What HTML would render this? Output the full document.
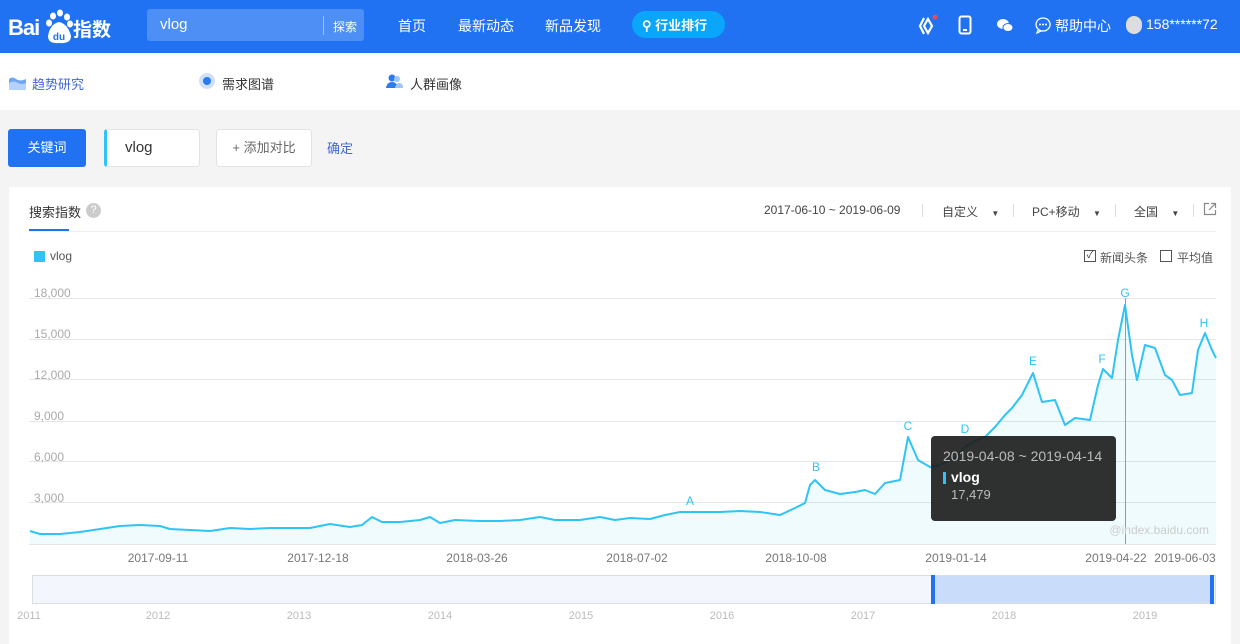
<!DOCTYPE html>
<html><head><meta charset="utf-8"><style>
*{margin:0;padding:0;box-sizing:border-box}
body{width:1240px;height:644px;overflow:hidden;background:#f4f4f4;font-family:"Liberation Sans","Noto Sans CJK SC",sans-serif;position:relative}
.a{position:absolute;white-space:nowrap}
.hd{position:absolute;left:0;top:0;width:1240px;height:53px;background:#2172f2}
.w{color:#fff;font-size:14px}
.nav2{position:absolute;left:0;top:53px;width:1240px;height:57px;background:#fff}
.card{position:absolute;left:9px;top:187px;width:1222px;height:457px;background:#fff}
.g{color:#999;font-size:12px}
</style></head><body>
<div class="hd"></div>
<div class="a" style="left:8px;top:15px;color:#fff;font-size:22px;font-weight:bold;letter-spacing:-1px">Bai</div>
<svg class="a" style="left:44px;top:8px" width="30" height="38" viewBox="0 0 30 38"><g fill="#fff"><ellipse cx="9" cy="8" rx="3" ry="3.5"/><ellipse cx="16" cy="5" rx="3" ry="3.5"/><ellipse cx="23" cy="9" rx="3" ry="3.5"/><ellipse cx="5" cy="15" rx="3" ry="3.5"/><ellipse cx="26" cy="16" rx="3" ry="3.5"/><path d="M4 28 Q6 16 15 14 Q24 16 27 28 Q27 36 15 35 Q4 36 4 28Z"/></g><text x="15" y="32" font-size="10" fill="#2172f2" text-anchor="middle" font-weight="bold" font-family="Liberation Sans">du</text></svg>
<div class="a" style="left:73px;top:15px;color:#fff;font-size:19px;font-weight:bold">指数</div>
<div class="a" style="left:147px;top:9px;width:217px;height:32px;background:#4d8ff5;border-radius:3px"></div>
<div class="a w" style="left:160px;top:16px;font-size:15px">vlog</div>
<div class="a" style="left:323px;top:16px;width:1px;height:19px;background:#9dbff8"></div>
<div class="a w" style="left:333px;top:18px;font-size:12px">探索</div>
<div class="a w" style="left:398px;top:16px">首页</div>
<div class="a w" style="left:458px;top:16px">最新动态</div>
<div class="a w" style="left:545px;top:16px">新品发现</div>
<div class="a" style="left:632px;top:11px;width:93px;height:27px;border-radius:14px;background:#0aa6fb"></div>
<div class="a w" style="left:642px;top:15px;font-size:13px;font-weight:bold">⚲ 行业排行</div>
<svg class="a" style="left:918px;top:15px" width="20" height="22"><path d="M6 3 L2 11 L6 19 M10 4 L14 11 L10 18 L6 11Z" stroke="#fff" stroke-width="2.2" fill="none"/><circle cx="17" cy="2" r="2.5" fill="#f0494f"/></svg>
<svg class="a" style="left:958px;top:15px" width="14" height="20"><rect x="1.5" y="1.5" width="11" height="17" rx="2" stroke="#fff" stroke-width="2" fill="none"/><rect x="5" y="14" width="4" height="2" fill="#fff"/></svg>
<svg class="a" style="left:996px;top:18px" width="18" height="15"><ellipse cx="7" cy="6" rx="6" ry="5" fill="#fff"/><ellipse cx="12" cy="9.5" rx="5" ry="4" fill="#fff" stroke="#2172f2" stroke-width="1"/></svg>
<svg class="a" style="left:1034px;top:16px" width="18" height="18"><path d="M9 2a7 6.5 0 1 0 0.1 0Z M4 14 L3 17 L7 15" stroke="#fff" stroke-width="1.3" fill="none"/><circle cx="6" cy="8.5" r="1" fill="#fff"/><circle cx="9" cy="8.5" r="1" fill="#fff"/><circle cx="12" cy="8.5" r="1" fill="#fff"/></svg>
<div class="a w" style="left:1055px;top:16px">帮助中心</div>
<div class="a" style="left:1126px;top:16px;width:16px;height:18px;border-radius:8px;background:#ddd"></div>
<div class="a w" style="left:1146px;top:16px">158******72</div>

<div class="nav2"></div>
<svg class="a" style="left:8px;top:73px" width="19" height="18"><path d="M1 1 V17 H18 V6 Q12 9 8 6 Q4 3 1 6" fill="#6da5f7"/><path d="M1 10 Q6 7 10 10 Q14 12 18 10 V17 H1Z" fill="#b4d1fb"/></svg>
<div class="a" style="left:32px;top:74px;font-size:13px;color:#4267d8">趋势研究</div>
<div class="a" style="left:199px;top:73px;width:16px;height:16px;border-radius:8px;background:#cfe0fc"></div>
<div class="a" style="left:203px;top:77px;width:8px;height:8px;border-radius:4px;background:#2a7af2"></div>
<div class="a" style="left:222px;top:74px;font-size:13px;color:#333">需求图谱</div>
<svg class="a" style="left:386px;top:74px" width="18" height="15"><circle cx="6" cy="4" r="3.5" fill="#2a7af2"/><path d="M0 14 Q1 8 6 8 Q11 8 12 14Z" fill="#2a7af2"/><circle cx="11" cy="5" r="3" fill="#9fc4fa"/><path d="M9 14 Q10 9 13 9 Q17 9 17 14Z" fill="#9fc4fa"/></svg>
<div class="a" style="left:410px;top:74px;font-size:13px;color:#333">人群画像</div>

<div class="a" style="left:8px;top:129px;width:78px;height:38px;background:#2172f2;border-radius:3px;color:#fff;font-size:13px;text-align:center;line-height:38px">关键词</div>
<div class="a" style="left:104px;top:129px;width:96px;height:38px;background:#fff;border:1px solid #e3e3e3;border-left:3px solid #2fc4f5;border-radius:3px;font-size:15px;color:#333;padding-left:18px;line-height:36px">vlog</div>
<div class="a" style="left:216px;top:129px;width:96px;height:38px;background:#fff;border:1px solid #e3e3e3;border-radius:3px;font-size:13px;color:#666;text-align:center;line-height:36px">+ 添加对比</div>
<div class="a" style="left:327px;top:138px;font-size:13px;color:#4267d8">确定</div>

<div class="card"></div>
<div class="a" style="left:29px;top:202px;font-size:13px;color:#333">搜索指数</div>
<div class="a" style="left:86px;top:203px;width:15px;height:15px;border-radius:8px;background:#ccc;color:#fff;font-size:11px;text-align:center;line-height:15px">?</div>
<div class="a" style="left:29px;top:229px;width:40px;height:2px;background:#2172f2"></div>
<div class="a" style="left:29px;top:231px;width:1187px;height:1px;background:#eee"></div>
<div class="a" style="left:764px;top:203px;font-size:12px;color:#444">2017-06-10 ~ 2019-06-09</div>
<div class="a" style="left:922px;top:204px;width:1px;height:13px;background:#ddd"></div>
<div class="a" style="left:942px;top:203px;font-size:12px;color:#444">自定义 &nbsp;&nbsp;&nbsp;<span style="font-size:8px">▼</span></div>
<div class="a" style="left:1013px;top:204px;width:1px;height:13px;background:#ddd"></div>
<div class="a" style="left:1032px;top:203px;font-size:12px;color:#444">PC+移动 &nbsp;&nbsp;&nbsp;<span style="font-size:8px">▼</span></div>
<div class="a" style="left:1115px;top:204px;width:1px;height:13px;background:#ddd"></div>
<div class="a" style="left:1134px;top:203px;font-size:12px;color:#444">全国 &nbsp;&nbsp;&nbsp;<span style="font-size:8px">▼</span></div>
<div class="a" style="left:1193px;top:204px;width:1px;height:13px;background:#ddd"></div>
<svg class="a" style="left:1203px;top:202px" width="14" height="14"><path d="M6 1.5H1.5V12.5H12.5V8 M8 1.5H12.5V6 M12.5 1.5L6 8" stroke="#888" stroke-width="1.2" fill="none"/></svg>
<div class="a" style="left:34px;top:251px;width:11px;height:11px;background:#2fc4f5"></div>
<div class="a" style="left:50px;top:249px;font-size:12px;color:#555">vlog</div>
<div class="a" style="left:1084px;top:250px;width:12px;height:12px;border:1px solid #555;font-size:10px;line-height:10px;text-align:center;color:#333">✓</div>
<div class="a" style="left:1100px;top:249px;font-size:12px;color:#555">新闻头条</div>
<div class="a" style="left:1160px;top:250px;width:12px;height:12px;border:1px solid #555"></div>
<div class="a" style="left:1177px;top:249px;font-size:12px;color:#555">平均值</div>

<svg class="a" style="left:0;top:280px" width="1240" height="364" font-family="Liberation Sans">
<g stroke="#e6e6e6" stroke-width="1"><line x1="29" x2="1216" y1="18.5" y2="18.5"/><line x1="29" x2="1216" y1="59.5" y2="59.5"/><line x1="29" x2="1216" y1="99.5" y2="99.5"/><line x1="29" x2="1216" y1="141.5" y2="141.5"/><line x1="29" x2="1216" y1="181.5" y2="181.5"/><line x1="29" x2="1216" y1="222.5" y2="222.5"/><line x1="29" x2="1216" y1="264.5" y2="264.5"/></g>
<g fill="#aaa" font-size="12"><text x="34" y="17">18,000</text><text x="34" y="58">15,000</text><text x="34" y="99">12,000</text><text x="34" y="140">9,000</text><text x="34" y="181">6,000</text><text x="34" y="222">3,000</text></g>
<path id="ln" d="M30 251 L40 254 L60 254 L80 252 L100 249 L120 246 L140 245 L160 246 L170 249 L190 250 L210 251 L230 248 L250 249 L270 248 L290 248 L310 248 L330 244 L350 247 L362 245 L372 237 L382 242 L400 242 L420 240 L430 237 L440 243 L455 240 L480 241 L500 241 L520 240 L540 237 L555 240 L580 240 L600 237 L615 240 L630 238 L650 239 L665 235 L680 232 L700 232 L720 232 L740 231 L760 232 L780 235 L795 228 L805 223 L810 205 L815 200 L825 210 L840 214 L855 212 L865 210 L875 214 L885 203 L900 200 L908 157 L918 180 L930 187 L940 185 L955 178 L965 167 L975 161 L985 157 L995 147 L1005 135 L1012 128 L1022 115 L1033 93 L1042 122 L1055 120 L1065 145 L1075 138 L1090 140 L1098 105 L1103 89 L1112 98 L1118 60 L1125 25 L1132 75 L1137 100 L1145 65 L1155 68 L1165 95 L1172 100 L1180 115 L1192 113 L1198 70 L1205 53 L1212 70 L1216 78" fill="none" stroke="#2fc4f5" stroke-width="2" stroke-linejoin="round"/>
<path d="M30 251 L40 254 L60 254 L80 252 L100 249 L120 246 L140 245 L160 246 L170 249 L190 250 L210 251 L230 248 L250 249 L270 248 L290 248 L310 248 L330 244 L350 247 L362 245 L372 237 L382 242 L400 242 L420 240 L430 237 L440 243 L455 240 L480 241 L500 241 L520 240 L540 237 L555 240 L580 240 L600 237 L615 240 L630 238 L650 239 L665 235 L680 232 L700 232 L720 232 L740 231 L760 232 L780 235 L795 228 L805 223 L810 205 L815 200 L825 210 L840 214 L855 212 L865 210 L875 214 L885 203 L900 200 L908 157 L918 180 L930 187 L940 185 L955 178 L965 167 L975 161 L985 157 L995 147 L1005 135 L1012 128 L1022 115 L1033 93 L1042 122 L1055 120 L1065 145 L1075 138 L1090 140 L1098 105 L1103 89 L1112 98 L1118 60 L1125 25 L1132 75 L1137 100 L1145 65 L1155 68 L1165 95 L1172 100 L1180 115 L1192 113 L1198 70 L1205 53 L1212 70 L1216 78 L1216 264 L30 264Z" fill="#2fc4f5" fill-opacity="0.07"/>
<line x1="1125.5" x2="1125.5" y1="18" y2="264" stroke="#999"/>
<g fill="#2fc4f5" font-size="12" text-anchor="middle"><text x="690" y="225">A</text><text x="816" y="191">B</text><text x="908" y="150">C</text><text x="965" y="153">D</text><text x="1033" y="85">E</text><text x="1102" y="83">F</text><text x="1125" y="17">G</text><text x="1204" y="47">H</text></g>
<text x="1209" y="254" fill="#ccc" font-size="12" text-anchor="end">@index.baidu.com</text>
<g fill="#777" font-size="12" text-anchor="middle"><text x="158" y="282">2017-09-11</text><text x="318" y="282">2017-12-18</text><text x="477" y="282">2018-03-26</text><text x="637" y="282">2018-07-02</text><text x="796" y="282">2018-10-08</text><text x="956" y="282">2019-01-14</text><text x="1116" y="282">2019-04-22</text><text x="1185" y="282">2019-06-03</text></g>
<rect x="32.5" y="295.5" width="1183" height="28" fill="#f3f7fd" stroke="#ddd"/>
<rect x="934" y="296" width="278" height="27" fill="#c9dcf9"/>
<rect x="931" y="295" width="4" height="29" fill="#2172f2"/><rect x="1210" y="295" width="4" height="29" fill="#2172f2"/>
<g fill="#bbb" font-size="11" text-anchor="middle"><text x="29" y="339">2011</text><text x="158" y="339">2012</text><text x="299" y="339">2013</text><text x="440" y="339">2014</text><text x="581" y="339">2015</text><text x="722" y="339">2016</text><text x="863" y="339">2017</text><text x="1004" y="339">2018</text><text x="1145" y="339">2019</text></g>
</svg>
<div class="a" style="left:931px;top:436px;width:185px;height:85px;background:rgba(30,30,30,0.92);border-radius:4px"></div>
<div class="a" style="left:943px;top:448px;font-size:14px;color:#bbb">2019-04-08 ~ 2019-04-14</div>
<div class="a" style="left:943px;top:472px;width:3px;height:12px;background:#2fc4f5"></div>
<div class="a" style="left:951px;top:469px;font-size:14px;color:#fff;font-weight:bold">vlog</div>
<div class="a" style="left:951px;top:487px;font-size:13px;color:#bbb">17,479</div>
</body></html>
